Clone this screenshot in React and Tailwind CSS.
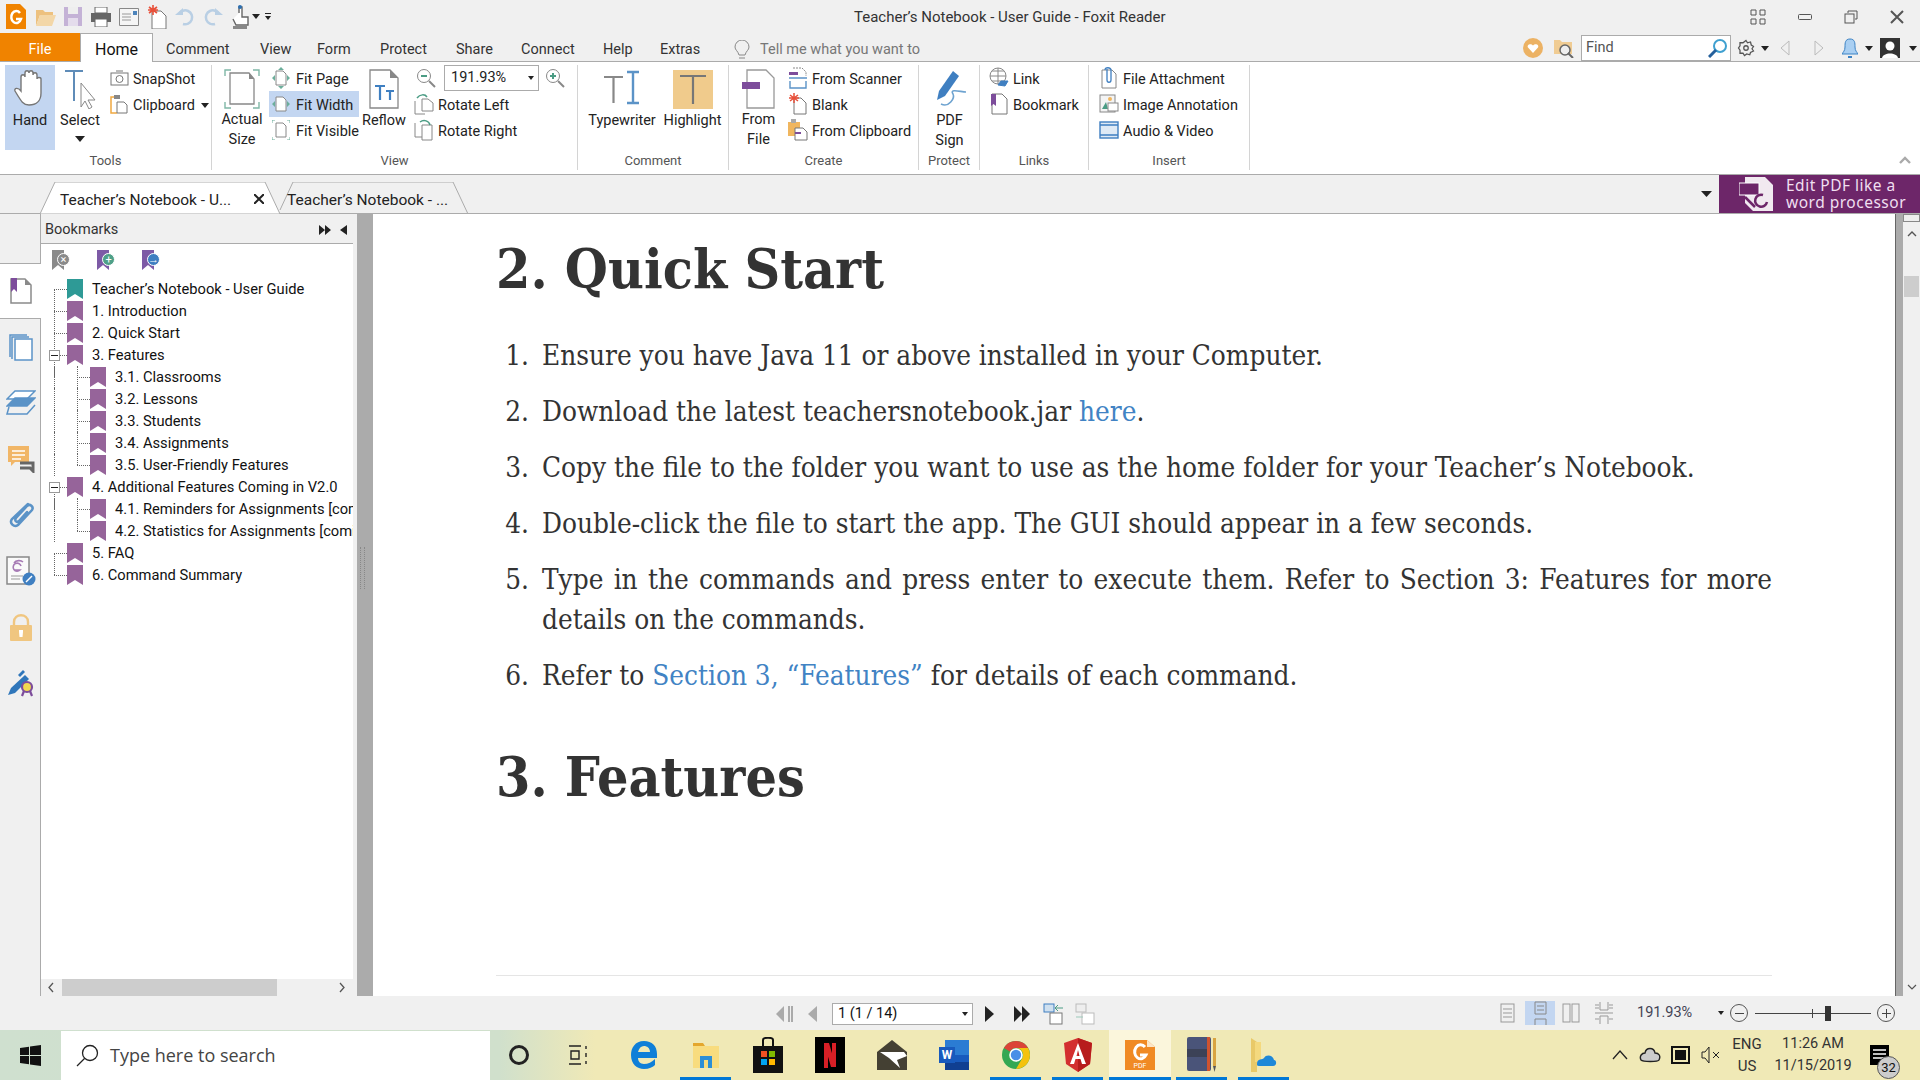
import React from "react";

const UI = { fontFamily: "Roboto, 'Noto Sans', sans-serif" };
const BM = ({ c = "#96649a", className = "" }) => (
  <svg width="16" height="20" viewBox="0 0 16 20" preserveAspectRatio="none" className={className}><path d="M0 0H16V20L8 15L0 20Z" fill={c} /></svg>
);
const Caret = ({ className = "" }) => (
  <svg width="8" height="5" viewBox="0 0 8 5" preserveAspectRatio="none" className={className}><path d="M0 0H8L4 5Z" fill="#222" /></svg>
);

function Row({ icon, label, active, wide }) {
  return (
    <div className={`flex items-center h-[26px] ${active ? "bg-[#c3d6f1]" : ""}`}>
      <span className={`flex shrink-0 justify-center ${wide ? "w-[23px]" : "w-[20px]"}`}>{icon}</span>
      <span className="ml-[4px] pt-[3px] text-[14.5px] whitespace-nowrap text-[#222]">{label}</span>
    </div>
  );
}
function Big({ cls, children, label }) {
  return (
    <div className={`flex flex-col items-center shrink-0 ${cls}`}>
      <div className="h-[45px] flex items-center justify-center pt-[3px]">{children}</div>
      <div className="text-[14.5px] leading-[20px] mt-[1px] text-center text-[#222] whitespace-pre-line">{label}</div>
    </div>
  );
}
function Group({ cls, label, children }) {
  return (
    <div className={`flex flex-col shrink-0 h-[105px] mt-[3px] border-r border-[#d4d4d4] ${cls}`}>
      <div className="flex h-[85px]">{children}</div>
      <div className="mt-auto text-center text-[13px] leading-[18px] text-[#555]">{label}</div>
    </div>
  );
}

const tree = [
  [0, "Teacher’s Notebook - User Guide", 0, 1],
  [0, "1. Introduction"],
  [0, "2. Quick Start"],
  [0, "3. Features", 1],
  [1, "3.1. Classrooms"],
  [1, "3.2. Lessons"],
  [1, "3.3. Students"],
  [1, "3.4. Assignments"],
  [1, "3.5. User-Friendly Features"],
  [0, "4. Additional Features Coming in V2.0", 1],
  [1, "4.1. Reminders for Assignments [coming in v2.0]"],
  [1, "4.2. Statistics for Assignments [coming in v2.0]"],
  [0, "5. FAQ"],
  [0, "6. Command Summary"],
];

const Rail = () => (
  <div className="w-[41px] shrink-0 flex flex-col items-center pt-[49px] pl-[2px] bg-[#f0f0f0] border-r border-[#ababab] relative">
    <div className="absolute left-0 top-[49px] w-[42px] h-[56px] bg-white border-y border-[#ababab]" />
    <div className="h-[56px] flex items-center justify-center relative">
      <svg width="24" height="28" viewBox="0 0 24 28" fill="none"><path d="M2 2H16L22 8V26H2Z" fill="#fff" stroke="#8a8a8a" strokeWidth="1.5" /><path d="M16 2V8H22Z" fill="#8a8a8a" /><path d="M2 1H8V15L5 12L2 15Z" fill="#7d4d9b" /></svg>
    </div>
    <div className="h-[56px] flex items-center justify-center">
      <svg width="24" height="28" viewBox="0 0 24 28" fill="none" stroke="#5b93c7" strokeWidth="1.5"><path d="M1 24V2H18" /><path d="M3 26V4H20" /><rect x="6" y="6" width="17" height="21" fill="#fff" /></svg>
    </div>
    <div className="h-[56px] flex items-center justify-center">
      <svg width="30" height="26" viewBox="0 0 30 26" fill="none" stroke="#5b93c7" strokeWidth="1.5"><path d="M9 1H29L21 9H1Z" fill="#fff" /><path d="M9 8H29L21 16H1Z" fill="#5b93c7" /><path d="M3 17L1 24H21L29 15" fill="none" /></svg>
    </div>
    <div className="h-[56px] flex items-center justify-center">
      <svg width="28" height="28" viewBox="0 0 28 28"><path d="M1 1H22V17H8L4 21V17H1Z" fill="#f1b667" /><path d="M5 6H18M5 10H18M5 14H14" stroke="#fff" strokeWidth="1.5" /><path d="M13 18H26V26L23 23H13" fill="none" stroke="#666" strokeWidth="3" /></svg>
    </div>
    <div className="h-[56px] flex items-center justify-center">
      <svg width="26" height="28" viewBox="0 0 26 28" fill="none" stroke="#5b93c7" strokeWidth="2.5" strokeLinecap="round"><path d="M20 3L4 18C1 22 6 27 10 24L24 9C26 6 22 2 19 5L8 17C6 20 9 22 11 20L19 11" /></svg>
    </div>
    <div className="h-[56px] flex items-center justify-center">
      <svg width="30" height="30" viewBox="0 0 30 30" fill="none"><rect x="1" y="1" width="22" height="27" fill="#fafafa" stroke="#888" strokeWidth="1.5" /><path d="M15 10A4 4 0 1 0 14 14H8M8 7C10 4 15 4 17 6" stroke="#a77bb5" strokeWidth="1.6" /><path d="M5 20H17M5 23H14" stroke="#999" /><circle cx="23" cy="23" r="6.5" fill="#3f7fc1" /><path d="M20 26L26 20" stroke="#fff" strokeWidth="1.5" /></svg>
    </div>
    <div className="h-[56px] flex items-center justify-center">
      <svg width="24" height="28" viewBox="0 0 24 28" fill="none"><path d="M5 13V9C5 0 19 0 19 9V13" stroke="#f0c680" strokeWidth="2.4" /><rect x="1" y="12" width="22" height="16" rx="1" fill="#f0c680" /><path d="M10 17H14V19L13.5 24H10.5L10 19Z" fill="#fff" /></svg>
    </div>
    <div className="h-[56px] flex items-center justify-center">
      <svg width="28" height="28" viewBox="0 0 28 28" fill="none"><path d="M1 26L4 19L18 6L22 10L8 24Z" fill="#2f76ba" /><path d="M11 6L16 1L18 3L13 8Z" fill="#2f76ba" /><path d="M15 27L17 22M25 27L23 22" stroke="#7d4d9b" strokeWidth="2.2" /><circle cx="20" cy="18" r="5" fill="#f3d94f" stroke="#7d4d9b" strokeWidth="2.2" /></svg>
    </div>
  </div>
);

const Bookmarks = () => (
  <div className="w-[312px] shrink-0 flex flex-col relative">
    <div className="h-[30px] flex items-center pl-[4px] pt-[2px] text-[14.5px] text-[#333] shrink-0 border-b border-[#ababab]">
      <span>Bookmarks</span>
      <div className="ml-auto flex items-center gap-[9px] pr-[6px]">
        <svg width="12" height="10" viewBox="0 0 12 10"><path d="M0 0L6 5L0 10ZM6 0L12 5L6 10Z" fill="#222" /></svg>
        <svg width="7" height="10" viewBox="0 0 7 10"><path d="M7 0L0 5L7 10Z" fill="#222" /></svg>
      </div>
    </div>
    <div className="flex-1 bg-white flex flex-col min-h-0">
      <div className="h-[34px] flex items-center pl-[11px] gap-[27px] shrink-0 pb-[3px]">
        {[["#8a8a8a", "#8a8a8a", "×"], ["#7d5aa6", "#4fa088", "+"], ["#7d5aa6", "#3f7fc1", "→"]].map(([a, b, g], i) => (
          <div key={i} className="relative w-[18px] h-[20px]">
            <BM c={a} className="w-[12px] h-[20px]" />
            <span className="absolute left-[5px] top-[3px] w-[13px] h-[13px] rounded-full text-white text-[11px] leading-[12px] text-center border border-white" style={{ background: b }}>{g}</span>
          </div>
        ))}
      </div>
      <div className="relative overflow-hidden flex-1 text-[14.7px] text-[#111]">
        {tree.map(([lvl, t, box, teal], i) => (
          <div key={i} className={`relative flex items-center h-[22px] whitespace-nowrap ${lvl ? "pl-[49px]" : "pl-[26px]"}`}>
            {lvl === 0 ? (
              <span className="absolute left-[13px] top-[11px] w-[13px] border-t border-dotted border-[#666]" />
            ) : (
              <span className="absolute left-[36px] top-[11px] w-[13px] border-t border-dotted border-[#666]" />
            )}
            {lvl === 0 && i < tree.length - 1 && <span className="absolute left-[13px] top-[11px] h-[22px] border-l border-dotted border-[#666]" />}
            {lvl === 0 && i > 0 && i === tree.length - 1 && <span className="absolute left-[13px] top-0 h-[11px] border-l border-dotted border-[#666]" />}
            {lvl === 1 && <span className="absolute left-[13px] top-0 h-[22px] border-l border-dotted border-[#666]" />}
            {lvl === 1 && (t.startsWith("3.5") || t.startsWith("4.2")) ? <span className="absolute left-[36px] top-0 h-[11px] border-l border-dotted border-[#666]" /> : lvl === 1 ? <span className="absolute left-[36px] top-0 h-[22px] border-l border-dotted border-[#666]" /> : null}
            {box ? <span className="absolute left-[8px] top-[6px] w-[11px] h-[11px] bg-white border border-[#999] flex items-center justify-center"><span className="w-[7px] h-px bg-[#222]" /></span> : null}
            <BM c={teal ? "#2e9a96" : "#96649a"} className="shrink-0" />
            <span className="ml-[9px]">{t}</span>
          </div>
        ))}
      </div>
      <div className="h-[17px] bg-[#f0f0f0] flex items-center shrink-0 text-[#666]">
        <svg width="21" height="17" viewBox="0 0 21 17" fill="none" stroke="#555" strokeWidth="1.3"><path d="M12 4L8 8.5L12 13" /></svg>
        <div className="w-[215px] h-full bg-[#cdcdcd]" />
        <svg className="ml-auto" width="21" height="17" viewBox="0 0 21 17" fill="none" stroke="#555" strokeWidth="1.3"><path d="M8 4L12 8.5L8 13" /></svg>
      </div>
    </div>
  </div>
);

const body = "text-[27.7px] leading-[40px] text-[#333]";
const items = [
  <>Ensure you have Java 11 or above installed in your Computer.</>,
  <>Download the latest teachersnotebook.jar <span className="text-[#4183c4]">here</span>.</>,
  <>Copy the file to the folder you want to use as the home folder for your Teacher’s Notebook.</>,
  <>Double-click the file to start the app. The GUI should appear in a few seconds.</>,
  <>Type in the commands and press enter to execute them. Refer to Section 3: Features for more details on the commands.</>,
  <>Refer to <span className="text-[#4183c4]">Section 3, “Features”</span> for details of each command.</>,
];
const SERIF = { fontFamily: "'DejaVu Serif Condensed', 'DejaVu Serif', 'Liberation Serif', serif" };

const Page = () => (
  <div className="flex-1 bg-white overflow-hidden relative pl-[123px] pr-[123px] min-w-0" style={SERIF}>
    <h1 className="text-[55px] font-bold leading-[66px] text-[#333] mt-[22px]">2. Quick Start</h1>
    <ol className="mt-[34px]">
      {items.map((t, i) => (
        <li key={i} className={`flex ${body} mb-[16px]`}>
          <span className="w-[33px] text-right shrink-0">{i + 1}.</span>
          <span className="ml-[13px] text-justify flex-1">{t}</span>
        </li>
      ))}
    </ol>
    <h1 className="text-[55px] font-bold leading-[66px] text-[#333] mt-[48px]">3. Features</h1>
    <div className="mt-[165px] h-px bg-[#e5e5e5]" />
  </div>
);

const TaskIcon = ({ on, hi, children }) => (
  <div className={`relative flex items-center justify-center shrink-0 h-full w-[62px] ${hi ? "bg-[#fbf6dc]" : ""}`}>
    {children}
    {on && <span className={`absolute bottom-0 h-[3px] bg-[#0078d7] ${hi ? "left-0 right-0" : "left-[5px] w-[51px]"}`} />}
  </div>
);

const menus = [
  ["Comment", "w-[94px]"], ["View", "w-[57px]"], ["Form", "w-[63px]"], ["Protect", "w-[76px]"],
  ["Share", "w-[65px]"], ["Connect", "w-[82px]"], ["Help", "w-[57px]"], ["Extras", "w-[74px]"],
];

export default function App() {
  return (
    <div className="w-[1920px] h-[1080px] flex flex-col overflow-hidden bg-[#f0f0f0] text-[#222]" style={UI}>
      {/* title bar */}
      <div className="h-[33px] shrink-0 flex items-center relative pl-[6px]">
        <svg width="20" height="25" viewBox="0 0 20 25"><path d="M0 0H14L20 6V25H0Z" fill="#f08300" /><path d="M14 9A5 6 0 1 0 15 15H10" fill="none" stroke="#fff" strokeWidth="2.5" /></svg>
        <svg className="ml-[10px]" width="20" height="18" viewBox="0 0 20 18"><path d="M0 2H7L9 4H17V7H4L0 18Z" fill="#edc17f" /><path d="M4 7H20L16 18H0Z" fill="#f3d7a8" /></svg>
        <svg className="ml-[8px]" width="18" height="19" viewBox="0 0 18 19"><path d="M0 0H18V19H0Z" fill="#c4b2d6" /><path d="M4 0H14V7H4Z" fill="#eee" /><path d="M4 11H14V19H4Z" fill="#e4dcec" /></svg>
        <svg className="ml-[9px]" width="20" height="20" viewBox="0 0 20 20"><path d="M4 0H16V6H4Z" fill="#fff" stroke="#666" /><path d="M0 6H20V15H0Z" fill="#666" /><path d="M4 12H16V20H4Z" fill="#fff" stroke="#666" /></svg>
        <svg className="ml-[8px]" width="20" height="18" viewBox="0 0 20 18"><path d="M0.5 0.5H19.5V17.5H0.5Z" fill="#f5f5f5" stroke="#888" /><path d="M3 6H12M3 9H12M3 12H12" stroke="#999" /><path d="M14 3H18V7H14Z" fill="#4d84bb" /></svg>
        <svg className="ml-[8px]" width="20" height="24" viewBox="0 0 20 24"><path d="M5 6H14L19 11V24H5Z" fill="#fff" stroke="#777" /><path d="M6 0V10M1 5H11M2 2L10 8M10 2L2 8" stroke="#e8503a" strokeWidth="1.6" /></svg>
        <svg className="ml-[8px]" width="20" height="20" viewBox="0 0 20 20" fill="none"><path d="M4 7A7 7 0 1 1 8 17" stroke="#b9cfe4" strokeWidth="2.5" /><path d="M0 8H8V1Z" fill="#b9cfe4" /></svg>
        <svg className="ml-[8px]" width="20" height="20" viewBox="0 0 20 20" fill="none"><path d="M16 7A7 7 0 1 0 12 17" stroke="#b9cfe4" strokeWidth="2.5" /><path d="M20 8H12V1Z" fill="#b9cfe4" /></svg>
        <svg className="ml-[9px]" width="18" height="24" viewBox="0 0 18 24" fill="none"><path d="M7 8V2H10V12H16V20H4L1 14" fill="#fff" stroke="#666" strokeWidth="1.4" /><path d="M1 21H15V24H1Z" fill="#888" /><circle cx="8" cy="2" r="2" fill="#2d6fb0" /></svg>
        <Caret className="ml-[2px]" />
        <svg className="ml-[5px]" width="6" height="7" viewBox="0 0 6 7"><path d="M0 0H6V1H0ZM0 3H6L3 7Z" fill="#222" /></svg>
        <div className="absolute left-[854px] top-[6px] text-[15px] leading-[22px] text-[#333]">Teacher’s Notebook - User Guide - Foxit Reader</div>
        <div className="ml-auto flex items-center pr-[16px] gap-[32px] text-[#555]">
          <svg width="16" height="16" viewBox="0 0 16 16" fill="none" stroke="#555"><path d="M1 1H6V6H1ZM10 1H15V6H10ZM1 10H6V15H1ZM10 10H15V15H10Z" /></svg>
          <svg width="14" height="6" viewBox="0 0 14 6" fill="none" stroke="#555"><rect x="0.5" y="0.5" width="13" height="5" rx="1" /></svg>
          <svg width="14" height="14" viewBox="0 0 14 14" fill="none" stroke="#555"><path d="M4 3V1H13V9H11" /><rect x="1" y="4" width="9" height="9" /></svg>
          <svg width="14" height="14" viewBox="0 0 14 14" fill="none" stroke="#555" strokeWidth="2"><path d="M1 1L13 13M13 1L1 13" /></svg>
        </div>
      </div>

      {/* menu tabs */}
      <div className="h-[29px] shrink-0 flex items-end relative border-b border-[#ababab] text-[14.5px]">
        <div className="w-[80px] h-[28px] bg-[#f08300] text-white flex items-center justify-center pt-[5px]">File</div>
        <div className="w-[73px] h-[29px] -mb-px bg-white border border-b-0 border-[#ababab] flex items-center justify-center text-[16px] text-[#111] pt-[3px]">Home</div>
        <div className="h-[28px] flex items-center pl-[13px] pt-[5px] text-[#333]">
          {menus.map(([t, w]) => <span key={t} className={w}>{t}</span>)}
          <span className="flex items-center w-[189px] overflow-hidden text-[#777] whitespace-nowrap">
            <svg className="mr-[10px] shrink-0" width="16" height="20" viewBox="0 0 16 20" fill="none" stroke="#888"><path d="M5 15C4 11 1 10 1 7A7 7 0 0 1 15 7C15 10 12 11 11 15Z" /><path d="M5 18H11" /></svg>
            Tell me what you want to do...
          </span>
        </div>
        <div className="ml-auto h-[28px] flex items-center pr-[3px] pt-[2px]">
          <svg width="20" height="20" viewBox="0 0 20 20"><circle cx="10" cy="10" r="10" fill="#ecb264" /><path d="M10 15L5 9.5C3.5 7 7.5 4.5 10 7.5C12.5 4.5 16.5 7 15 9.5Z" fill="#fff" /></svg>
          <svg className="ml-[11px]" width="20" height="20" viewBox="0 0 20 20" fill="none"><path d="M0 2H6L8 4H18V16H0Z" fill="#f0cc93" /><circle cx="11" cy="12" r="5" fill="#eee" stroke="#666" strokeWidth="1.5" /><path d="M14 15L19 20" stroke="#666" strokeWidth="2" /></svg>
          <div className="ml-[7px] w-[150px] h-[26px] bg-white border border-[#ababab] flex items-center pl-[4px] text-[14.5px] text-[#555]">
            Find
            <svg className="ml-auto mr-[2px]" width="20" height="20" viewBox="0 0 20 20" fill="none"><circle cx="12" cy="8" r="6" stroke="#3fa0d0" strokeWidth="2" /><path d="M8 12L1 19" stroke="#25609c" strokeWidth="3" /></svg>
          </div>
          <svg className="ml-[6px]" width="18" height="18" viewBox="0 0 24 24" fill="none" stroke="#555" strokeWidth="1.7"><circle cx="12" cy="12" r="3" /><path d="M12 2L14 5L18 4L19 8L22 10L20 13L22 16L18 18L17 21L13 20L10 22L8 19L4 19L4 15L2 12L4 9L4 5L8 5Z" /></svg>
          <Caret className="ml-[6px]" />
          <svg className="ml-[11px]" width="10" height="16" viewBox="0 0 10 16" fill="none" stroke="#bbb"><path d="M9 1L1 8L9 15Z" /></svg>
          <svg className="ml-[24px]" width="10" height="16" viewBox="0 0 10 16" fill="none" stroke="#bbb"><path d="M1 1L9 8L1 15Z" /></svg>
          <svg className="ml-[18px]" width="16" height="20" viewBox="0 0 16 20"><path d="M8 1C3 1 3 5 3 9C3 13 1 14 0 16H16C15 14 13 13 13 9C13 5 13 1 8 1Z" fill="#a9cff2" stroke="#3b82c4" /><path d="M6 18H10V20H6Z" fill="#3b82c4" /></svg>
          <Caret className="ml-[7px]" />
          <svg className="ml-[7px]" width="20" height="20" viewBox="0 0 20 20"><rect width="20" height="20" fill="#333" /><circle cx="10" cy="8" r="4.5" fill="#fff" /><path d="M2 20C3 14 17 14 18 20Z" fill="#fff" /></svg>
          <Caret className="ml-[9px]" />
        </div>
      </div>

      {/* ribbon */}
      <div className="h-[113px] shrink-0 bg-white border-b border-[#ababab] flex relative">
        <Group cls="w-[212px]" label="Tools">
          <div className="ml-[5px] w-[50px] h-[85px] bg-[#c3d6f1] flex flex-col items-center">
            <svg className="mt-[4px]" width="32" height="38" viewBox="0 0 32 38" fill="#fff" stroke="#777" strokeWidth="1.4"><path d="M7 22V8C7 5 11 5 11 8V4C11 1 15 1 15 4C15 1 19 1 19 4V6C19 3 23 3 23 6V10C23 8 27 8 27 10V24C27 32 22 36 15 36C9 36 7 32 1 22C0 19 4 18 7 22Z" /></svg>
            <span className="text-[14.5px] leading-[20px] mt-[4px]">Hand</span>
          </div>
          <div className="w-[50px] flex flex-col items-center">
            <svg className="mt-[4px]" width="34" height="40" viewBox="0 0 34 40" fill="none"><path d="M2 2H20M11 2V32" stroke="#5f8cb8" strokeWidth="2" /><path d="M18 14V38L22 32L26 40L29 38L25 31H32Z" fill="#fff" stroke="#888" /></svg>
            <span className="text-[14.5px] leading-[20px] mt-[2px]">Select</span>
            <Caret className="mt-[5px] w-[10px] h-[6px]" />
          </div>
          <div className="ml-[4px] flex flex-col">
            <Row label="SnapShot" icon={<svg width="19" height="16" viewBox="0 0 19 16" fill="none" stroke="#777"><rect x="1" y="3" width="17" height="12" /><circle cx="9.5" cy="9" r="3.5" /><path d="M6 1H13" /></svg>} />
            <Row label={<span className="flex items-center">Clipboard<Caret className="ml-[6px]" /></span>} icon={<svg width="18" height="20" viewBox="0 0 18 20" fill="none"><path d="M5 3H1V19H7" stroke="#f0a840" strokeWidth="1.5" /><path d="M4 1H10V5H4Z" fill="#888" /><path d="M7 8H14L17 11V19H7Z" fill="#fff" stroke="#777" /></svg>} />
          </div>
        </Group>
        <Group cls="w-[366px]" label="View">
          <Big cls="w-[54px] ml-[3px]" label={"Actual\nSize"}>
            <svg width="36" height="40" viewBox="0 0 36 40" fill="none"><path d="M1 7V1H7M29 1H35V7M1 33V39H7M29 39H35V33" stroke="#7fb7a6" strokeWidth="1.4" /><path d="M6 4H25L30 10V35H6Z" fill="#fff" stroke="#888" strokeWidth="1.3" /><path d="M25 4V10H30Z" fill="#888" /></svg>
          </Big>
          <div className="flex flex-col w-[90px] shrink-0">
            <Row wide label="Fit Page" icon={<svg width="18" height="22" viewBox="0 0 18 22" fill="none"><path d="M4 4H11L14 7V18H4Z" stroke="#888" /><path d="M9 0L6 3H12ZM9 22L6 19H12ZM0 11L3 8V14ZM18 11L15 8V14Z" fill="#6cae9b" /></svg>} />
            <Row wide active label="Fit Width" icon={<svg width="18" height="16" viewBox="0 0 18 16" fill="none"><path d="M4 1H11L14 4V15H4Z" fill="#fff" stroke="#888" /><path d="M0 8L3 5V11ZM18 8L15 5V11Z" fill="#6cae9b" /></svg>} />
            <Row wide label="Fit Visible" icon={<svg width="18" height="20" viewBox="0 0 18 20" fill="none"><path d="M4 3H11L14 6V17H4Z" stroke="#888" /><path d="M0 3V0H3M15 0H18V3M0 17V20H3M15 20H18V17" stroke="#6cae9b" /></svg>} />
          </div>
          <Big cls="w-[50px]" label="Reflow">
            <svg width="30" height="40" viewBox="0 0 30 40" fill="none"><path d="M1 1H21L29 9V39H1Z" fill="#fff" stroke="#888" strokeWidth="1.3" /><path d="M21 1V9H29Z" fill="#888" /><path d="M6 17H16M11 17V31M17 22H25M21 22V31" stroke="#3f7fc1" strokeWidth="2.2" /></svg>
          </Big>
          <div className="flex flex-col ml-[5px]">
            <div className="h-[26px] flex items-center">
              <svg className="ml-[2px]" width="20" height="20" viewBox="0 0 20 20" fill="none"><circle cx="8" cy="8" r="6.5" stroke="#888" /><path d="M5 8H11" stroke="#4b9c84" strokeWidth="2" /><path d="M13 13L19 19" stroke="#888" strokeWidth="2" /></svg>
              <div className="ml-[8px] w-[95px] h-[26px] border border-[#ababab] flex items-center pl-[6px] text-[14.5px]">191.93%<Caret className="ml-auto mr-[4px] w-[6px] h-[4px]" /></div>
              <svg className="ml-[6px]" width="20" height="20" viewBox="0 0 20 20" fill="none"><circle cx="8" cy="8" r="6.5" stroke="#888" /><path d="M5 8H11M8 5V11" stroke="#4b9c84" strokeWidth="2" /><path d="M13 13L19 19" stroke="#888" strokeWidth="2" /></svg>
            </div>
            <Row label="Rotate Left" icon={<svg width="20" height="22" viewBox="0 0 20 22" fill="none" stroke="#888"><path d="M1 8V21H11M8 6H14L19 10V18H8Z" /><path d="M3 5C6 1 11 1 13 4" stroke="#4b9c84" strokeWidth="1.5" /></svg>} />
            <Row label="Rotate Right" icon={<svg width="20" height="22" viewBox="0 0 20 22" fill="none" stroke="#888"><path d="M1 4V18H8M8 6H18V21H8Z" /><path d="M6 3C10 0 15 2 16 6" stroke="#4b9c84" strokeWidth="1.5" /></svg>} />
          </div>
        </Group>
        <Group cls="w-[151px]" label="Comment">
          <Big cls="w-[88px]" label="Typewriter">
            <svg width="38" height="40" viewBox="0 0 38 40" fill="none"><path d="M1 8H20M10.5 8V34" stroke="#888" strokeWidth="2.2" /><path d="M24 3H36M24 34H36M30 3V34" stroke="#5b93c7" strokeWidth="2.4" /></svg>
          </Big>
          <Big cls="w-[53px]" label="Highlight">
            <div className="w-[40px] h-[39px] bg-[#f0cb8c] flex items-center justify-center">
              <svg width="28" height="34" viewBox="0 0 28 34" fill="none"><path d="M1 4H27M14 4V32" stroke="#777" strokeWidth="2.2" /></svg>
            </div>
          </Big>
        </Group>
        <Group cls="w-[190px]" label="Create">
          <Big cls="w-[59px]" label={"From\nFile"}>
            <svg width="34" height="40" viewBox="0 0 34 40" fill="none"><path d="M5 1H24L32 9V39H5Z" fill="#fff" stroke="#999" strokeWidth="1.3" /><path d="M0 13H18V20H0Z" fill="#7d4d9b" /></svg>
          </Big>
          <div className="flex flex-col">
            <Row label="From Scanner" icon={<svg width="20" height="22" viewBox="0 0 20 22" fill="none"><path d="M5 1H14L18 5V9" stroke="#888" strokeDasharray="2 1" /><path d="M1 5H10V8H1Z" fill="#7d4d9b" /><path d="M1 11H19M2 14V21H18V14" stroke="#5b93c7" strokeWidth="1.4" /></svg>} />
            <Row label="Blank" icon={<svg width="20" height="22" viewBox="0 0 20 22" fill="none"><path d="M6 5H13L18 10V21H6Z" fill="#fff" stroke="#777" /><path d="M6 0V10M1 5H11M2 2L10 8M10 2L2 8" stroke="#e8503a" strokeWidth="1.5" /></svg>} />
            <Row label="From Clipboard" icon={<svg width="20" height="22" viewBox="0 0 20 22" fill="none"><path d="M0 3H12V17H0Z" fill="#f0b65f" /><path d="M3 0H8V4H3Z" fill="#aaa" /><path d="M7 9H15L19 13V21H7Z" fill="#fff" stroke="#777" /><path d="M7 13H13V15H7Z" fill="#7d4d9b" /></svg>} />
          </div>
        </Group>
        <Group cls="w-[61px]" label="Protect">
          <Big cls="w-[61px]" label={"PDF\nSign"}>
            <svg width="34" height="42" viewBox="0 0 34 42" fill="none"><path d="M20 3L26 8L12 28L4 32L6 23Z" fill="#3f7fc1" /><path d="M8 36C16 40 22 30 20 26C16 20 28 24 33 24" stroke="#6ea3d0" strokeWidth="1.6" /></svg>
          </Big>
        </Group>
        <Group cls="w-[109px]" label="Links">
          <div className="flex flex-col pl-[9px]">
            <Row label="Link" icon={<svg width="20" height="22" viewBox="0 0 20 22" fill="none" stroke="#888"><circle cx="9" cy="9" r="8" /><path d="M1 9H17M9 1V17M3 4H15M3 14H15" /><path d="M9 18L12 14H19L16 19Z" fill="#3f7fc1" stroke="#3f7fc1" /></svg>} />
            <Row label="Bookmark" icon={<svg width="18" height="22" viewBox="0 0 18 22" fill="none"><path d="M2 1H12L17 6V21H2Z" fill="#fff" stroke="#777" /><path d="M1 1H6V13L3.5 11L1 13Z" fill="#7d4d9b" /></svg>} />
          </div>
        </Group>
        <Group cls="w-[161px]" label="Insert">
          <div className="flex flex-col pl-[10px]">
            <Row label="File Attachment" icon={<svg width="16" height="22" viewBox="0 0 16 22" fill="none"><path d="M1 3H11L15 7V21H1Z" fill="#fff" stroke="#888" /><path d="M6 2V13C6 16 10 16 10 13V3C10 0 4 0 4 3" stroke="#3f7fc1" strokeWidth="1.3" /></svg>} />
            <Row label="Image Annotation" icon={<svg width="20" height="20" viewBox="0 0 20 20" fill="none"><rect x="1" y="1" width="15" height="17" fill="#f4f4f4" stroke="#888" /><path d="M3 15L7 8L9 15Z" fill="#4b9c84" /><rect x="9" y="9" width="10" height="8" fill="#fff" stroke="#888" /><circle cx="11" cy="5" r="2" fill="#f0b65f" /></svg>} />
            <Row label="Audio & Video" icon={<svg width="20" height="18" viewBox="0 0 20 18" fill="none"><rect x="1" y="1" width="18" height="16" fill="#dfeaf5" stroke="#3f7fc1" strokeWidth="1.4" /><path d="M1 4H19M1 14H19" stroke="#3f7fc1" strokeWidth="1.4" /></svg>} />
          </div>
        </Group>
        <svg className="absolute left-[1899px] top-[94px]" width="12" height="8" viewBox="0 0 12 8" fill="none" stroke="#aaa" strokeWidth="2.4"><path d="M1 7L6 2L11 7" /></svg>
      </div>

      {/* doc tabs */}
      <div className="h-[39px] shrink-0 border-b border-[#ababab] flex relative">
        <div className="absolute left-[40px] bottom-[-1px] w-[240px] h-[32px]">
          <svg className="absolute inset-0" width="240" height="32" viewBox="0 0 240 32"><path d="M0 32L15 0H225L240 32Z" fill="#fff" stroke="#ababab" /></svg>
          <span className="absolute left-[20px] top-[7px] text-[15.5px] whitespace-nowrap text-[#222]">Teacher’s Notebook - U...</span>
          <svg className="absolute left-[214px] top-[12px]" width="10" height="10" viewBox="0 0 10 10" stroke="#222" strokeWidth="2"><path d="M0 0L10 10M10 0L0 10" /></svg>
        </div>
        <div className="absolute left-[275px] bottom-[-1px] w-[193px] h-[32px]">
          <svg className="absolute inset-0" width="193" height="32" viewBox="0 0 193 32"><path d="M5 28L18 0H178L193 32" fill="none" stroke="#ababab" /></svg>
          <span className="absolute left-[12px] top-[7px] text-[15.5px] whitespace-nowrap text-[#222]">Teacher’s Notebook - ...</span>
        </div>
        <div className="ml-auto flex items-center">
          <Caret className="w-[11px] h-[6px] mr-[7px]" />
          <div className="w-[201px] h-[38px] bg-[#6d2669] flex items-center pl-[20px]">
            <svg width="36" height="34" viewBox="0 0 36 34"><path d="M6 0H26L34 8V34H14L6 26Z" fill="#fff" opacity=".9" /><rect x="0" y="6" width="20" height="12" fill="#6d2669" stroke="#fff" /><path d="M6 20L16 30M24 18A6 6 0 1 0 28 25" stroke="#6d2669" strokeWidth="2.5" fill="none" /></svg>
            <div className="ml-[11px] text-[15.5px] leading-[17px] text-[#f0dff0] whitespace-nowrap tracking-[0.5px]" style={{ fontFamily: "'Noto Sans', sans-serif" }}>Edit PDF like a<br />word processor</div>
          </div>
        </div>
      </div>

      {/* main */}
      <div className="flex-1 flex min-h-0">
        <Rail />
        <Bookmarks />
        <div className="w-[4px] shrink-0" />
        <div className="w-[16px] shrink-0 bg-[#ababab] pl-[3px] pt-[333px]"><span className="block w-[5px] h-[42px] border-x border-dotted border-[#888]" /></div>
        <Page />
        <div className="w-[8px] shrink-0 bg-[#ababab] border-l border-[#666]" />
        <div className="w-[17px] shrink-0 bg-[#f0f0f0] flex flex-col items-center">
          <div className="w-full h-[8px] border border-[#888] bg-[#eee]" />
          <svg className="mt-[9px]" width="10" height="6" viewBox="0 0 10 6" fill="none" stroke="#555" strokeWidth="1.4"><path d="M1 5L5 1L9 5" /></svg>
          <div className="w-[15px] h-[21px] bg-[#cdcdcd] mt-[39px]" />
          <svg className="mt-auto mb-[6px]" width="10" height="6" viewBox="0 0 10 6" fill="none" stroke="#555" strokeWidth="1.2"><path d="M1 1L5 5L9 1" /></svg>
        </div>
      </div>

      {/* status bar */}
      <div className="h-[34px] shrink-0 flex items-center relative pt-[1px]">
        <div className="ml-[776px] flex items-center">
          <svg width="17" height="16" viewBox="0 0 17 16" fill="#aaa"><path d="M8 0L0 8L8 16ZM12 0H14V16H12ZM15 0H17V16H15Z" /></svg>
          <svg className="ml-[15px]" width="9" height="16" viewBox="0 0 9 16" fill="#aaa"><path d="M9 0L0 8L9 16Z" /></svg>
          <div className="ml-[15px] w-[141px] h-[22px] bg-white border border-[#ababab] flex items-center pl-[5px] text-[14.5px] text-[#111]">1 (1 / 14)<Caret className="ml-auto mr-[4px] w-[6px] h-[4px]" /></div>
          <svg className="ml-[12px]" width="9" height="16" viewBox="0 0 9 16" fill="#222"><path d="M0 0L9 8L0 16Z" /></svg>
          <svg className="ml-[20px]" width="16" height="16" viewBox="0 0 16 16" fill="#222"><path d="M0 0L8 8L0 16ZM8 0L16 8L8 16Z" /></svg>
          <svg className="ml-[13px]" width="21" height="22" viewBox="0 0 21 22" fill="none"><rect x="1" y="1" width="10" height="8" fill="#cfe0ef" stroke="#3f7fc1" /><rect x="7" y="10" width="12" height="11" fill="#fff" stroke="#777" /><path d="M12 5H20M12 5L15 2M12 5L15 8" stroke="#4b9c84" /></svg>
          <svg className="ml-[11px]" width="21" height="22" viewBox="0 0 21 22" fill="none"><rect x="1" y="1" width="10" height="8" fill="#eee" stroke="#bbb" /><rect x="7" y="10" width="12" height="11" fill="#fff" stroke="#bbb" /><path d="M1 14H8" stroke="#9cc9ba" /></svg>
        </div>
        <div className="absolute left-[1500px] top-0 h-full flex items-center">
          <svg width="15" height="20" viewBox="0 0 15 20" fill="none" stroke="#999"><rect x="1" y="1" width="13" height="18" /><path d="M3 6H12M3 10H12M3 14H12" /></svg>
          <div className="ml-[10px] w-[30px] h-[24px] bg-[#c3d6f1] flex items-center justify-center">
            <svg width="15" height="24" viewBox="0 0 15 24" fill="none" stroke="#888"><path d="M2 1H13V13H2ZM2 18H13V24M2 24V18M4 5H11M4 9H11" /></svg>
          </div>
          <svg className="ml-[7px]" width="18" height="20" viewBox="0 0 18 20" fill="none" stroke="#999"><rect x="1" y="1" width="7" height="18" /><rect x="10" y="1" width="7" height="18" /></svg>
          <svg className="ml-[15px]" width="18" height="22" viewBox="0 0 18 22" fill="none" stroke="#999"><path d="M5 0V8H13V0M0 3H4M14 3H18M0 6H4M14 6H18M5 22V14H13V22M0 17H4M14 17H18M0 11H18" /></svg>
          <span className="ml-[24px] text-[14.5px] text-[#445]">191.93%</span>
          <Caret className="ml-[26px] w-[6px] h-[4px]" />
          <span className="ml-[6px] w-[18px] h-[18px] rounded-full border border-[#555] flex items-center justify-center"><span className="w-[9px] h-px bg-[#444]" /></span>
          <div className="relative ml-[7px] w-[116px] h-px bg-[#444]">
            <span className="absolute left-[57px] -top-[4px] w-px h-[9px] bg-[#444]" />
            <span className="absolute left-[70px] -top-[7px] w-[6px] h-[15px] bg-[#333]" />
          </div>
          <span className="relative ml-[6px] w-[18px] h-[18px] rounded-full border border-[#555] flex items-center justify-center"><span className="w-[9px] h-px bg-[#444]" /><span className="absolute w-px h-[9px] bg-[#444]" /></span>
        </div>
      </div>

      {/* taskbar */}
      <div className="h-[50px] shrink-0 flex items-center bg-[linear-gradient(90deg,#cfe0cf_0%,#d0e0cc_26%,#f0e9b6_31%,#f0e9b6_100%)]">
        <div className="w-[61px] flex justify-center">
          <svg width="21" height="21" viewBox="0 0 21 21" fill="#111"><path d="M0 3L9 1.7V10H0ZM10 1.5L21 0V10H10ZM0 11H9V19.3L0 18ZM10 11H21V21L10 19.5Z" /></svg>
        </div>
        <div className="w-[429px] h-[49px] mt-px bg-white flex items-center pl-[14px] text-[#444] text-[18px]" style={{ fontFamily: "'Open Sans', sans-serif" }}>
          <svg width="24" height="24" viewBox="0 0 24 24" fill="none" stroke="#222" strokeWidth="1.3"><circle cx="15" cy="9" r="7.5" /><path d="M9.5 14.5L2 22" /></svg>
          <span className="ml-[11px]">Type here to search</span>
        </div>
        <div className="w-[58px] flex justify-center">
          <span className="w-[20px] h-[20px] rounded-full border-[3px] border-[#222]" />
        </div>
        <div className="w-[65px] flex justify-center pr-[3px]">
          <svg width="22" height="20" viewBox="0 0 22 20" fill="none" stroke="#222" strokeWidth="1.4"><path d="M1 1H13M1 19H13M3 6H11V14H3ZM18 1V4M18 8V12M18 16V19" /></svg>
        </div>
        <div className="flex h-full items-center">
          <TaskIcon><svg width="28" height="30" viewBox="0 0 28 30"><path d="M14 1C5 1 1 8 1 15C1 24 7 29 14 29C19 29 23 27 25 25V19C22 22 18 24 14 24C10 24 8 21 8 18H27V14C27 6 22 1 14 1ZM8 12C9 8 11 6 14 6C17 6 20 8 20 12Z" fill="#0f7fd8" /></svg></TaskIcon>
          <TaskIcon on><svg width="28" height="28" viewBox="0 0 28 28"><path d="M1 2H11L13 5H1Z" fill="#e4a72d" /><path d="M1 5H27V27H1Z" fill="#f8dc7e" /><path d="M8 15H20V27H16V19H12V27H8Z" fill="#2d8fd6" /></svg></TaskIcon>
          <TaskIcon><svg width="30" height="36" viewBox="0 0 30 36"><path d="M10 9V3C10 0 20 0 20 3V9" fill="none" stroke="#111" strokeWidth="2" /><rect y="9" width="30" height="27" fill="#111" /><rect x="8" y="14" width="6" height="6" fill="#f25022" /><rect x="16" y="14" width="6" height="6" fill="#7fba00" /><rect x="8" y="22" width="6" height="6" fill="#00a4ef" /><rect x="16" y="22" width="6" height="6" fill="#ffb900" /></svg></TaskIcon>
          <TaskIcon><svg width="30" height="36" viewBox="0 0 30 36"><rect width="30" height="36" fill="#000" /><path d="M9 6H14L21 30H16ZM9 6H13V31H9ZM17 6H21V30H17Z" fill="#d81f26" /></svg></TaskIcon>
          <TaskIcon><svg width="30" height="30" viewBox="0 0 30 30"><path d="M0 12L15 0L30 12V30H0Z" fill="#444033" /><path d="M3 12H27L30 16L20 20L23 28L12 18Z" fill="#fff" /></svg></TaskIcon>
          <TaskIcon><svg width="30" height="30" viewBox="0 0 30 30"><rect x="6" width="24" height="30" fill="#2b7cd3" /><rect x="6" y="15" width="24" height="8" fill="#185abd" /><rect x="6" y="22" width="24" height="8" fill="#103f91" /><rect y="7" width="16" height="16" fill="#185abd" /><text x="8" y="19" textAnchor="middle" fontSize="12" fontWeight="700" fill="#fff" fontFamily="Roboto">W</text></svg></TaskIcon>
          <TaskIcon on><svg width="28" height="28" viewBox="0 0 28 28"><circle cx="14" cy="14" r="14" fill="#34a853" /><path d="M14 0A14 14 0 0 1 26.1 7H14A7 7 0 0 0 7.9 10.5L1.9 7A14 14 0 0 1 14 0Z" fill="#db4437" /><path d="M26.1 7A14 14 0 0 1 14 28L20.1 17.5A7 7 0 0 0 14 7Z" fill="#f4c20d" /><circle cx="14" cy="14" r="6" fill="#4a8fe7" stroke="#fff" strokeWidth="1.6" /></svg></TaskIcon>
          <TaskIcon on><svg width="28" height="34" viewBox="0 0 28 34"><path d="M14 0L28 5L26 26L14 34L2 26L0 5Z" fill="#d32f2f" /><path d="M14 0L28 5L26 26L14 34Z" fill="#b71c1c" /><path d="M14 5L6 26H10L11.5 21H16.5L18 26H22ZM12.5 18L14 12L15.5 18Z" fill="#fff" /></svg></TaskIcon>
          <TaskIcon on hi><svg width="30" height="30" viewBox="0 0 30 30"><path d="M0 0H22L30 7V30H0Z" fill="#f08a24" /><path d="M22 0V7H30Z" fill="#fbe6c8" /><path d="M20 7A6 7 0 1 0 21 15H15" fill="none" stroke="#fff" strokeWidth="3" /><text x="15" y="28" textAnchor="middle" fontSize="7" fill="#fff" fontFamily="Roboto">PDF</text></svg></TaskIcon>
          <TaskIcon on><svg width="30" height="36" viewBox="0 0 30 36"><rect width="24" height="34" rx="2" fill="#4a5479" /><rect y="12" width="20" height="8" fill="#3c4257" /><rect x="20" width="3" height="34" fill="#d0532f" /><rect x="26" y="1" width="3" height="28" fill="#d9a441" /><path d="M26 29H29L27.5 35Z" fill="#555" /></svg></TaskIcon>
          <TaskIcon on><svg width="26" height="34" viewBox="0 0 26 34"><path d="M0 0L6 4V34H0Z" fill="#e9c968" /><path d="M4 4H10V24H4Z" fill="#f4d97e" /><path d="M6 26C6 20 12 22 13 20C15 16 22 17 23 22C26 22 26 28 22 28H8C6 28 6 27 6 26Z" fill="#1e88d8" /></svg></TaskIcon>
        </div>
        <div className="ml-auto flex items-center h-full">
          <svg width="16" height="10" viewBox="0 0 16 10" fill="none" stroke="#222" strokeWidth="1.3"><path d="M1 9L8 1L15 9" /></svg>
          <svg className="ml-[11px]" width="22" height="20" viewBox="0 0 22 20"><path d="M6 8C7 2 15 2 16 8C20 8 22 11 20 15C19 17 4 17 2 15C0 11 3 8 6 8Z" fill="#ccc" stroke="#222" strokeWidth="1.4" /></svg>
          <svg className="ml-[10px]" width="20" height="18" viewBox="0 0 20 18"><rect x="1" y="1" width="17" height="16" fill="none" stroke="#111" strokeWidth="2" /><rect x="4" y="4" width="11" height="10" fill="#111" /></svg>
          <svg className="ml-[10px]" width="20" height="18" viewBox="0 0 20 18" fill="none" stroke="#222"><path d="M1 6H4L8 1V17L4 12H1Z" /><path d="M12 6L18 12M18 6L12 12" /></svg>
          <div className="ml-[7px] w-[38px] text-center text-[15px] leading-[22px] text-[#333]">ENG<br />US</div>
          <div className="ml-[2px] w-[90px] text-center text-[14.5px] leading-[22px] text-[#333]">11:26 AM<br />11/15/2019</div>
          <div className="relative ml-[12px] w-[50px] h-full">
            <svg className="absolute left-0 top-[15px]" width="19" height="20" viewBox="0 0 19 20"><path d="M0 0H19V20H0Z" fill="#000" /><path d="M3 5H16M3 9H16M3 13H16" stroke="#fff" strokeWidth="1.5" /></svg>
            <span className="absolute left-[7px] top-[26px] w-[23px] h-[23px] rounded-full bg-[#ccc] border border-[#555] text-[13px] leading-[21px] text-center text-[#111]">32</span>
          </div>
        </div>
      </div>
    </div>
  );
}
